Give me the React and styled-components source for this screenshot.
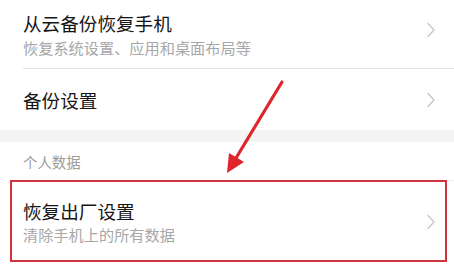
import React from 'react';
import styled, { createGlobalStyle } from 'styled-components';

const GlobalStyle = createGlobalStyle`
  html, body {
    margin: 0;
    padding: 0;
    background: #ffffff;
  }
  body {
    font-family: "Noto Sans CJK SC", "Noto Sans", sans-serif;
  }
`;

const Page = styled.div`
  position: relative;
  width: 454px;
  height: 272px;
  overflow: hidden;
  background: #ffffff;
`;

const Item = styled.div`
  display: flex;
  align-items: center;
  padding-left: 23px;
  position: relative;

  ${(p) =>
    p.$highlight &&
    `
    &::after {
      content: '';
      position: absolute;
      top: 0;
      bottom: 0;
      left: 10px;
      right: 7px;
      border: 2px solid #d2333f;
    }
  `}
`;

const ItemBody = styled.div`
  flex: 1;
  display: flex;
  align-items: center;
  height: ${(p) => p.$height}px;
  padding-right: 18px;
  box-sizing: border-box;
  border-bottom: ${(p) => (p.$divider ? '1px solid #e3e3e3' : 'none')};
  border-top: ${(p) => (p.$topLine ? '1px solid #ececec' : 'none')};
`;

const Texts = styled.div`
  flex: 1;
  display: flex;
  flex-direction: column;
  gap: ${(p) => p.$gap || 0}px;
`;

const Title = styled.div`
  font-size: 18.6px;
  line-height: 24px;
  color: #161616;
`;

const Sub = styled.div`
  font-size: 15.2px;
  line-height: 20px;
  color: #a7a7a7;
`;

const Band = styled.div`
  height: 12px;
  background: #f4f4f4;
`;

const SectionHeader = styled.div`
  height: 38px;
  padding: 10px 0 0 23px;
  box-sizing: border-box;
  font-size: 14.4px;
  line-height: 20px;
  color: #9d9d9d;
`;

const ChevronBox = styled.span`
  display: flex;
  margin-bottom: ${(p) => p.$lift || 0}px;
`;

const Arrow = styled.svg`
  position: absolute;
  left: 0;
  top: 0;
  pointer-events: none;
`;

const Chevron = ({ lift }) => (
  <ChevronBox $lift={lift}>
    <svg width="10" height="16" viewBox="0 0 10 16">
      <polyline
        points="2,1.5 8,8 2,14.5"
        fill="none"
        stroke="#c6c6c6"
        strokeWidth="1.3"
        strokeLinecap="round"
        strokeLinejoin="round"
      />
    </svg>
  </ChevronBox>
);

export default function App() {
  return (
    <Page>
      <GlobalStyle />
      <Item>
        <ItemBody $height={69} $divider>
          <Texts $gap={2}>
            <Title>从云备份恢复手机</Title>
            <Sub>恢复系统设置、应用和桌面布局等</Sub>
          </Texts>
          <Chevron lift={8} />
        </ItemBody>
      </Item>
      <Item>
        <ItemBody $height={61}>
          <Texts>
            <Title>备份设置</Title>
          </Texts>
          <Chevron />
        </ItemBody>
      </Item>
      <Band />
      <SectionHeader>个人数据</SectionHeader>
      <Item $highlight>
        <ItemBody $height={82} $topLine>
          <Texts $gap={1}>
            <Title>恢复出厂设置</Title>
            <Sub>清除手机上的所有数据</Sub>
          </Texts>
          <Chevron />
        </ItemBody>
      </Item>
      <Arrow width="454" height="272" viewBox="0 0 454 272">
        <line x1="282" y1="82" x2="233" y2="163" stroke="#e0242c" strokeWidth="3.2" strokeLinecap="round" />
        <polygon points="227,173 229,153 244,162" fill="#e0242c" />
      </Arrow>
    </Page>
  );
}
